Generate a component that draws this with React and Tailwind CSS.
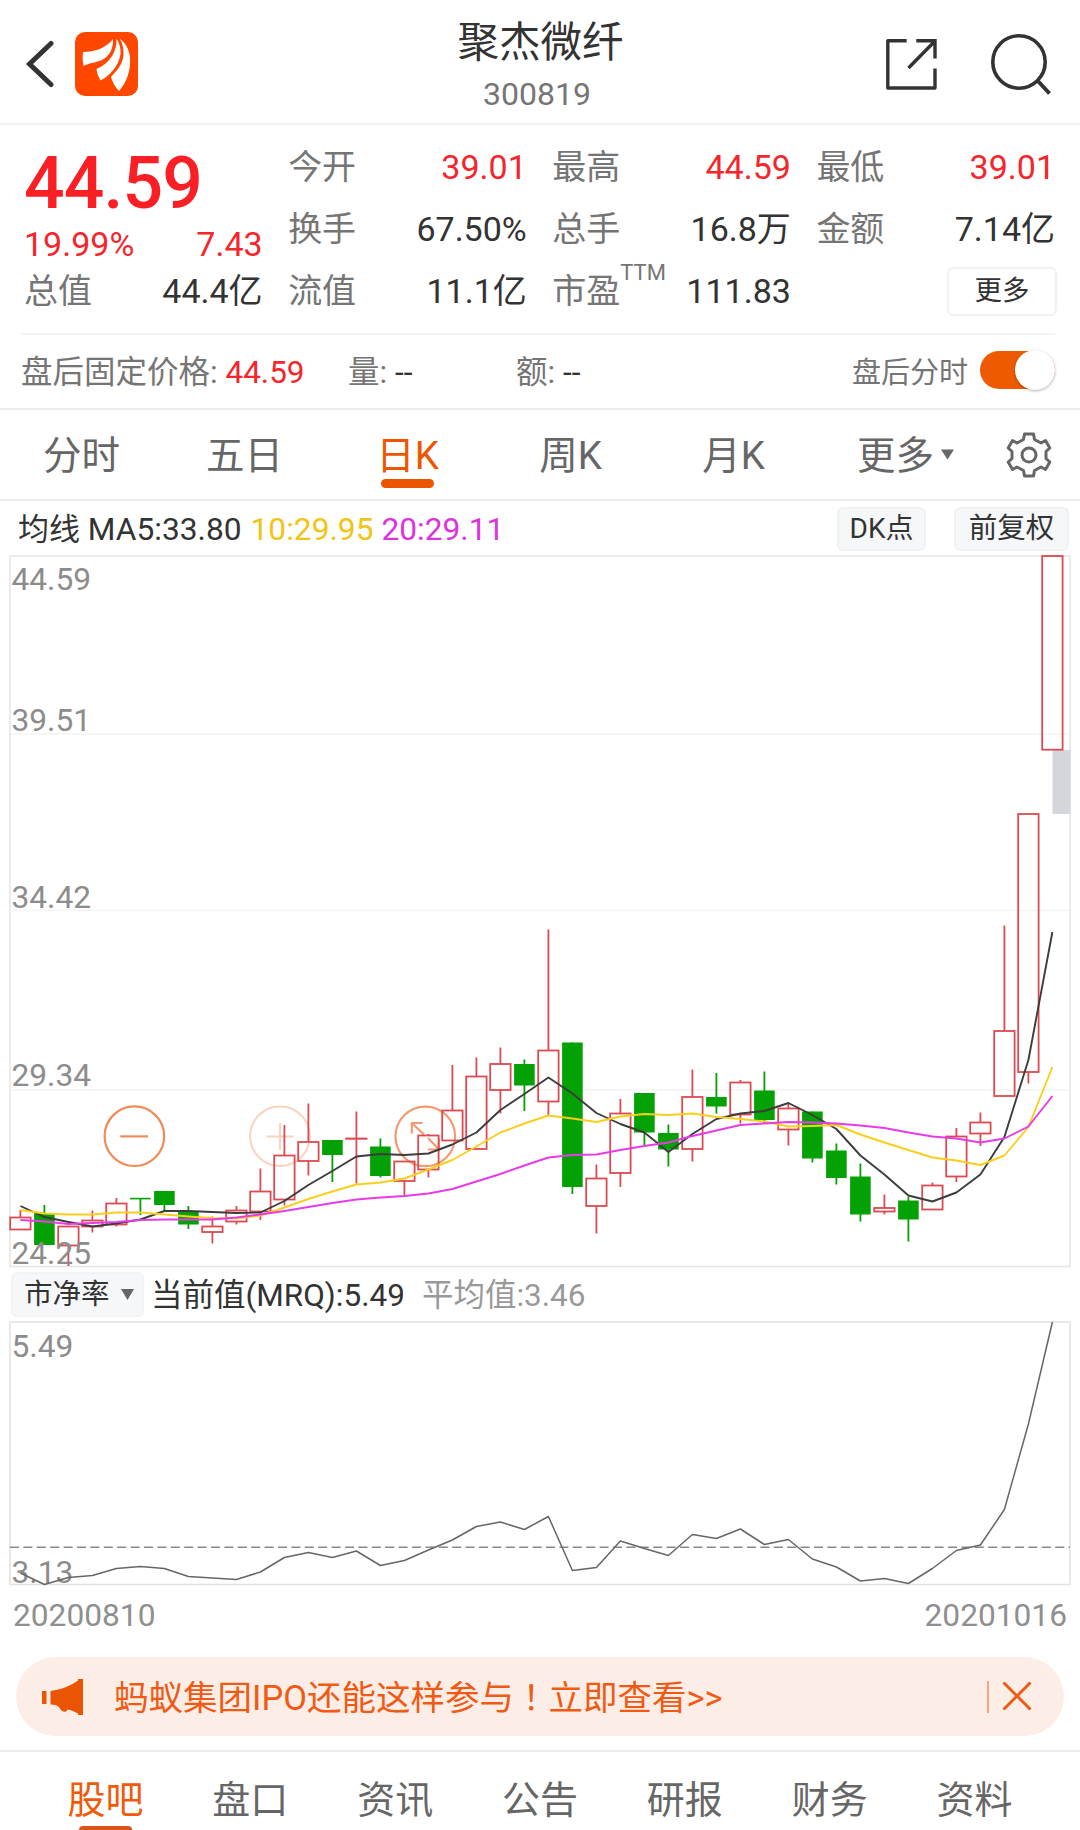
import React from "react";

const RED = "#dc4a52";
const GREEN = "#04a104";

// Each candle: [kind, bodyTop, bodyBottom, wickTop, wickBottom]
const CANDLES = [
  ["r", 1217.5, 1229.5, 1210, 1229.5],
  ["g", 1213.5, 1245, 1205, 1245],
  ["r", 1226.5, 1245.5, 1226, 1266],
  ["r", 1220.5, 1226.5, 1210.5, 1232.5],
  ["r", 1203.5, 1224.5, 1198, 1226.5],
  ["g", 1197.8, 1199.4, 1198, 1215],
  ["g", 1191, 1205, 1191, 1211],
  ["g", 1211, 1224.5, 1206, 1229],
  ["r", 1226.5, 1232, 1216.5, 1243.5],
  ["r", 1210.5, 1221.5, 1206, 1224.5],
  ["r", 1191.5, 1211.5, 1168.5, 1220],
  ["r", 1155.5, 1199.5, 1125, 1205.5],
  ["r", 1142, 1161, 1103.5, 1175.5],
  ["g", 1140, 1155, 1140, 1182],
  ["r", 1138.5, 1138.8, 1111.5, 1183.5],
  ["g", 1146.5, 1176, 1138.5, 1177.5],
  ["r", 1161.5, 1181, 1161.5, 1196.5],
  ["r", 1135.5, 1169.5, 1134, 1177.5],
  ["r", 1110.5, 1140.5, 1065, 1140.5],
  ["r", 1076.5, 1149, 1057.5, 1149],
  ["r", 1064, 1090, 1047.5, 1113.5],
  ["g", 1064, 1085.5, 1059.5, 1111],
  ["r", 1050.5, 1101.5, 929.5, 1115],
  ["g", 1042.5, 1187, 1042.5, 1194],
  ["r", 1178.5, 1206, 1164.5, 1233.5],
  ["r", 1113.5, 1173, 1099, 1187],
  ["g", 1093, 1132.5, 1093, 1145],
  ["g", 1133, 1149.5, 1124.5, 1166.5],
  ["r", 1097, 1149, 1069.5, 1161.5],
  ["g", 1097, 1106.5, 1073, 1113.5],
  ["r", 1082.5, 1114.5, 1080, 1123.5],
  ["g", 1090.5, 1120, 1071.5, 1124],
  ["r", 1108.5, 1129.5, 1103, 1145.5],
  ["g", 1111.5, 1158.5, 1111.5, 1162.5],
  ["g", 1150.5, 1178, 1143.5, 1184.5],
  ["g", 1176.5, 1214.5, 1163.5, 1221.5],
  ["r", 1208, 1211.5, 1194.5, 1214.5],
  ["g", 1200.5, 1219.5, 1196.5, 1241.5],
  ["r", 1185.5, 1209.5, 1182.5, 1209.5],
  ["r", 1136.5, 1176.5, 1128, 1182],
  ["r", 1122.5, 1133.5, 1112.5, 1146],
  ["r", 1031, 1096, 925.5, 1096],
  ["r", 814, 1072, 814, 1083.5],
  ["r", 556, 749.7, 556, 749.7],
];

const MA5 = [1206, 1217, 1222, 1226.5, 1223.5, 1219.5, 1211, 1211, 1212, 1213, 1212.5, 1201, 1185, 1171, 1156.5, 1154, 1155, 1153.5, 1144.5, 1132.5, 1110, 1094, 1077.5, 1093.5, 1113, 1124, 1132.5, 1152, 1134, 1119, 1113.5, 1111, 1103, 1115, 1129, 1155.5, 1174.5, 1195.5, 1201.5, 1192.5, 1174.5, 1137, 1060, 932];
const MA10 = [1210, 1213.5, 1214.5, 1214.5, 1212.5, 1212.5, 1214.5, 1216.5, 1218, 1218.5, 1215.5, 1207.5, 1199, 1191.5, 1184.5, 1182.5, 1178.5, 1169.5, 1160, 1146.5, 1132.5, 1123.5, 1115.5, 1118.5, 1122, 1116.5, 1114, 1115, 1113.5, 1117, 1119, 1121.5, 1126.5, 1126, 1125, 1134.5, 1142.5, 1150, 1157.5, 1160.5, 1165, 1155.5, 1127, 1067];
const MA20 = [1220, 1221.5, 1224, 1223, 1222, 1220, 1219.5, 1219.5, 1219.5, 1217.5, 1214.5, 1211, 1207, 1203, 1199.5, 1197.5, 1196, 1193.5, 1189, 1181.5, 1174, 1165.5, 1157.5, 1155, 1154.5, 1150, 1146, 1142.5, 1136, 1130.5, 1125, 1123.5, 1122, 1122.5, 1123.5, 1125.5, 1128, 1132.5, 1136.5, 1138.5, 1142.5, 1138.5, 1126.5, 1096];
const PB = [1573, 1584.5, 1577.5, 1575.5, 1568.5, 1566.5, 1568.5, 1576.5, 1578, 1579.5, 1572, 1557.5, 1552.5, 1557.5, 1551, 1565.5, 1560.5, 1550, 1540, 1526.5, 1522, 1529.5, 1516.5, 1570.5, 1567.5, 1541, 1548.5, 1555.5, 1534.5, 1538.5, 1529, 1544.5, 1539.5, 1559, 1567, 1581, 1578.5, 1583.5, 1568.5, 1550.5, 1545, 1509.5, 1424, 1322];

const xAt = (i) => 20.4 + 24 * i;
const toPoints = (values) => values.map((v, i) => `${xAt(i)},${v}`).join(" ");

function Candle({ x, data }) {
  const [kind, top, bottom, wickTop, wickBottom] = data;
  if (kind === "g") {
    return (
      <g>
        <rect x={x - 0.9} y={wickTop} width="1.8" height={wickBottom - wickTop} fill={GREEN} />
        <rect x={x - 10.3} y={top} width="20.6" height={bottom - top} fill={GREEN} />
      </g>
    );
  }
  return (
    <g stroke={RED} strokeWidth="1.8" fill="none">
      {wickTop < top && <path d={`M${x} ${wickTop}V${top}`} />}
      {wickBottom > bottom && <path d={`M${x} ${bottom}V${wickBottom}`} />}
      <rect x={x - 10.2} y={top} width="20.4" height={bottom - top} />
    </g>
  );
}

function Header() {
  return (
    <header className="flex h-[125px] items-center border-b-2 border-[#f2f2f2] pl-[25px] pr-[28px]">
      <div className="flex flex-1 items-center gap-[20px] pt-[5px]">
        <svg width="30" height="48" viewBox="0 0 30 48" fill="none" stroke="#333" strokeWidth="5" strokeLinecap="round">
          <path d="M26 3.5L4.5 24L26 44.5" />
        </svg>
        <svg width="63" height="64" viewBox="0 0 63 64">
          <rect width="63" height="64" rx="10" fill="#ff4700" />
          <g fill="#fff">
            <path d="M8 20C20 20 31 16 38 7C38.500 16 35 24 27 28C20 31 14 31 8.500 34C7.500 29 7.500 24 8 20Z" />
            <path d="M41.500 7C42 18 36 31 21.500 37C22 41 23.500 45 25.500 48.500C36 43 44 33 45.500 22C46 16 44 10 41.500 7Z" />
            <path d="M45 7C49 14 50 24 46 32C43 38 39 41 36 45C37.500 50 40 55 44 59C52 50 56 38 55 25C54 17 50 10 45 7Z" />
          </g>
        </svg>
      </div>
      <div className="flex flex-col items-center pt-[7px]">
        <h1 className="pl-[4px] text-[41.5px] leading-[50px] text-[#333]">聚杰微纤</h1>
        <div className="mt-[8px] pr-[3px] text-[32px] leading-[36px] text-[#757575]">300819</div>
      </div>
      <div className="flex flex-1 items-center justify-end gap-[52px] pt-[5px]">
        <svg width="54" height="54" viewBox="0 0 54 54" fill="none" stroke="#333" strokeWidth="3.4">
          <path d="M22.700 3.700H3.800V51H51V31.500" strokeLinejoin="round" />
          <path d="M32.300 3.700H51V21.500M24.500 31L50 5" />
        </svg>
        <svg width="62" height="64" viewBox="0 0 62 64" fill="none" stroke="#333" strokeWidth="3.600">
          <circle cx="29" cy="30" r="26.200" />
          <path d="M47 48L59.500 61.500" strokeWidth="4" />
        </svg>
      </div>
    </header>
  );
}

function Stat({ label, sup, value, red }) {
  return (
    <div className="flex h-[62px] items-center justify-between">
      <span className="relative text-[#757575]">
        {label}
        {sup && <span className="absolute left-[68px] top-0 -mt-[11px] text-[22px] leading-[26px]">{sup}</span>}
      </span>
      <span className={red ? "text-[#f5262b]" : "text-[#333]"}>{value}</span>
    </div>
  );
}

function Quote() {
  return (
    <section className="h-[208px] pl-[24px] pr-[25px] pt-[11px] text-[34px] leading-[40px]">
      <div className="grid grid-cols-4 gap-x-[25.500px]">
        <div>
          <div className="h-[92px] pt-[12px] text-[71.500px] font-medium leading-[72px] tracking-[-0.9px] text-[#fa1f24]">44.59</div>
          <div className="flex h-[32px] items-center justify-between text-[#f5262b]">
            <span>19.99%</span>
            <span>7.43</span>
          </div>
          <Stat label="总值" value="44.4亿" />
        </div>
        <div>
          <Stat label="今开" value="39.01" red />
          <Stat label="换手" value="67.50%" />
          <Stat label="流值" value="11.1亿" />
        </div>
        <div>
          <Stat label="最高" value="44.59" red />
          <Stat label="总手" value="16.8万" />
          <Stat label="市盈" sup="TTM" value="111.83" />
        </div>
        <div>
          <Stat label="最低" value="39.01" red />
          <Stat label="金额" value="7.14亿" />
          <div className="flex h-[62px] items-center justify-end">
            <button className="-mr-[2px] flex h-[49px] w-[110px] items-center justify-center rounded-[6px] border-2 border-[#f2f2f2] text-[27.500px] text-[#333]">更多</button>
          </div>
        </div>
      </div>
    </section>
  );
}

function AfterHours() {
  return (
    <section className="border-b-2 border-[#ececec] pl-[21px] pr-[25px]">
      <div className="flex h-[75px] items-center border-t-2 border-[#f4f4f4] text-[31.500px] leading-[40px] text-[#757575]">
        <div className="w-[327px] pt-[2px]">
          盘后固定价格: <span className="text-[#f5262b]">44.59</span>
        </div>
        <div className="w-[168px] pt-[2px]">
          量: <span className="text-[#333]">--</span>
        </div>
        <div className="flex-1 pt-[2px]">
          额: <span className="text-[#333]">--</span>
        </div>
        <span className="mr-[12px] pt-[2px] text-[29px]">盘后分时</span>
        <div className="mb-[3px] flex h-[38px] w-[75px] items-center justify-end rounded-full bg-[#ee5a00]">
          <div className="h-[40px] w-[40px] shrink-0 rounded-full bg-white shadow-[0_1px_3px_rgba(0,0,0,0.3)]" />
        </div>
      </div>
    </section>
  );
}

function PeriodTabs() {
  return (
    <nav className="flex h-[91px] items-center border-b-2 border-[#ececec] text-[38.500px] leading-[44px] text-[#666]">
      {["分时", "五日", "日K", "周K", "月K"].map((t) => (
        <div key={t} className={t === "日K" ? "relative w-[163px] pt-[3px] text-center text-[#ee5500]" : "w-[163px] pt-[3px] text-center"}>
          {t}
          {t === "日K" && <div className="absolute left-[55px] top-[48px] h-[9px] w-[53px] rounded-full bg-[#ea5504]" />}
        </div>
      ))}
      <div className="flex w-[191px] items-center gap-[7px] pl-[42px] pt-[3px]">
        更多
        <svg className="-mt-[3px]" width="13" height="11" viewBox="0 0 14 11" fill="#666"><path d="M0 0H14L7 11Z" /></svg>
      </div>
      <svg className="-ml-[2px] mt-px" width="50" height="50" viewBox="-25 -25 50 50" fill="none" stroke="#666" strokeWidth="3" strokeLinejoin="round">
        <path d="M-4.500-21H4.500L5.500-15.500L12-12L16.500-14.500L20.800-7L17-3.500V3.500L20.800 7L16.500 14.500L12 12L5.500 15.500L4.500 21H-4.500L-5.500 15.500L-12 12L-16.500 14.500L-20.800 7L-17 3.500V-3.500L-20.800-7L-16.500-14.500L-12-12L-5.500-15.500Z" />
        <circle r="7" />
      </svg>
    </nav>
  );
}

function MaLegend() {
  return (
    <div className="flex h-[54px] items-center pl-[18px] pr-[11px] pt-[1px] text-[31.700px] leading-[40px]">
      <span className="pt-[2px] text-[#333]"><span className="text-[31px]">均线</span> MA5:33.80</span>
      <span className="ml-[9px] pt-[2px] text-[#f2c413]">10:29.95</span>
      <span className="ml-[8px] pt-[2px] text-[#dd33dd]">20:29.11</span>
      <span className="ml-auto flex h-[44px] w-[89px] items-center justify-center rounded-[6px] border-2 border-[#eff1f2] bg-[#f5f7f9] text-[28px] text-[#333]">DK点</span>
      <span className="ml-[28px] flex h-[44px] w-[115px] items-center justify-center rounded-[6px] border-2 border-[#eff1f2] bg-[#f5f7f9] text-[28.500px] text-[#333]">前复权</span>
    </div>
  );
}

function CandleChart() {
  return (
    <svg className="block overflow-visible" width="1080" height="713" viewBox="0 555 1080 713">
      <g stroke="#f4f4f4" strokeWidth="1.500">
        <path d="M10 734H1070M10 910.500H1070M10 1090H1070" />
      </g>
      <rect x="10" y="556" width="1060" height="710.500" fill="none" stroke="#e6e6e6" strokeWidth="1.600" />
      <g fill="none" strokeWidth="2.200" stroke="#f08a58">
        <circle cx="134.400" cy="1136.200" r="29.800" />
        <path d="M120.300 1136.400H148" />
      </g>
      <g fill="none" strokeWidth="2" stroke="#fad2c0">
        <circle cx="280" cy="1136.200" r="29.800" />
        <path d="M266.500 1136.400H293.500M280 1123V1150" />
      </g>
      <g fill="none" strokeWidth="2.200" stroke="#f59a70">
        <circle cx="425.300" cy="1136.400" r="29.800" />
        <path d="M422.500 1123H411.800V1133.500M411.800 1123L424 1134.500M428 1138L439 1149.500M439 1138.500V1149.500H428" />
      </g>
      <rect x="1052.500" y="750" width="18" height="64" fill="#d3d7dc" />
      {CANDLES.map((c, i) => (
        <Candle key={i} x={xAt(i)} data={c} />
      ))}
      <g fill="none" strokeWidth="1.900" strokeLinejoin="round">
        <polyline points={toPoints(MA5)} stroke="#3c3c3c" />
        <polyline points={toPoints(MA10)} stroke="#f9cf1c" />
        <polyline points={toPoints(MA20)} stroke="#e83be8" />
      </g>
      <g fontSize="31.700" fill="#8c8c8c">
        <text x="11.500" y="590">44.59</text>
        <text x="11.500" y="730.500">39.51</text>
        <text x="11.500" y="908">34.42</text>
        <text x="11.500" y="1085.500">29.34</text>
        <text x="11.500" y="1263.500">24.25</text>
      </g>
    </svg>
  );
}

function PbLegend() {
  return (
    <div className="flex h-[53px] items-center pl-[11px] text-[31.500px] leading-[40px]">
      <span className="flex h-[45px] w-[133px] items-center gap-[11px] rounded-[6px] border-2 border-[#f2f3f4] bg-[#f5f7f9] pl-[11px] text-[28.500px] text-[#333]">
        市净率
        <svg width="13" height="11" viewBox="0 0 13 11" fill="#666"><path d="M0 0H13L6.500 11Z" /></svg>
      </span>
      <span className="ml-[7px] pt-[2px] text-[#333]">当前值(MRQ):5.49</span>
      <span className="ml-[17px] pt-[2px] text-[#999]">平均值:3.46</span>
    </div>
  );
}

function PbChart() {
  return (
    <svg className="block overflow-visible" width="1080" height="265" viewBox="0 1321 1080 265">
      <rect x="10" y="1322" width="1060" height="262.500" fill="none" stroke="#e3e3e3" strokeWidth="1.600" />
      <path d="M10 1547.200H1070" stroke="#888" strokeWidth="1.600" strokeDasharray="9 4.400" />
      <g fontSize="31.700" fill="#8c8c8c">
        <text x="11.500" y="1356.500">5.49</text>
        <text x="11.500" y="1582.500">3.13</text>
      </g>
      <polyline points={toPoints(PB)} fill="none" stroke="#666" strokeWidth="1.500" strokeLinejoin="round" />
    </svg>
  );
}

function Banner() {
  return (
    <div className="mx-[16px] flex h-[79px] items-center rounded-full bg-[#fceee6] pl-[26px] pr-[32px] text-[#f05a14]">
      <svg width="42" height="36" viewBox="0 0 42 36" fill="#ea5504">
        <rect x="0" y="12" width="4.500" height="13" />
        <path d="M8.500 12C20 10.500 28 7 36 1.500V0H41V36H36V34.500C32 32.500 29 31 25.500 30.500C24 34 21 33 18.500 30.500C17.500 28.500 16 26.500 13.500 26L8.500 25.500Z" />
      </svg>
      <span className="ml-[30px] text-[34.500px] leading-[40px]">
        蚂蚁集团IPO还能这样参与<span className="font-['Noto_Sans_CJK_TC']">！</span>立即查看&gt;&gt;
      </span>
      <div className="ml-auto h-[32px] w-[2px] bg-[#f5a581]" />
      <svg className="-mt-[2px] ml-[13px]" width="30" height="30" viewBox="0 0 30 30" fill="none" stroke="#ee5a14" strokeWidth="3">
        <path d="M1.500 1.500L28.500 28.500M28.500 1.500L1.500 28.500" />
      </svg>
    </div>
  );
}

function BottomTabs() {
  return (
    <nav className="mt-[14px] grid h-[80px] grid-cols-7 border-t-2 border-[#ececec] px-[33px] text-[38px] leading-[44px] text-[#666]">
      {["股吧", "盘口", "资讯", "公告", "研报", "财务", "资料"].map((t, i) => (
        <div key={t} className={i === 0 ? "flex flex-col items-center justify-between pt-[26px] text-[#f05a0a]" : "flex flex-col items-center pt-[26px]"}>
          {t}
          {i === 0 && <div className="h-[4px] w-[53px] rounded-t-[4px] bg-[#d9541a]" />}
        </div>
      ))}
    </nav>
  );
}

export default function App() {
  return (
    <div className="h-[1830px] w-[1080px] overflow-hidden bg-white font-['Roboto','Noto_Sans_CJK_SC',sans-serif]">
      <Header />
      <Quote />
      <AfterHours />
      <PeriodTabs />
      <MaLegend />
      <CandleChart />
      <PbLegend />
      <PbChart />
      <div className="flex h-[71px] items-center justify-between px-[13px] pb-[12px] text-[31.700px] leading-[36px] text-[#8f8f8f]">
        <span>20200810</span>
        <span>20201016</span>
      </div>
      <Banner />
      <BottomTabs />
    </div>
  );
}
